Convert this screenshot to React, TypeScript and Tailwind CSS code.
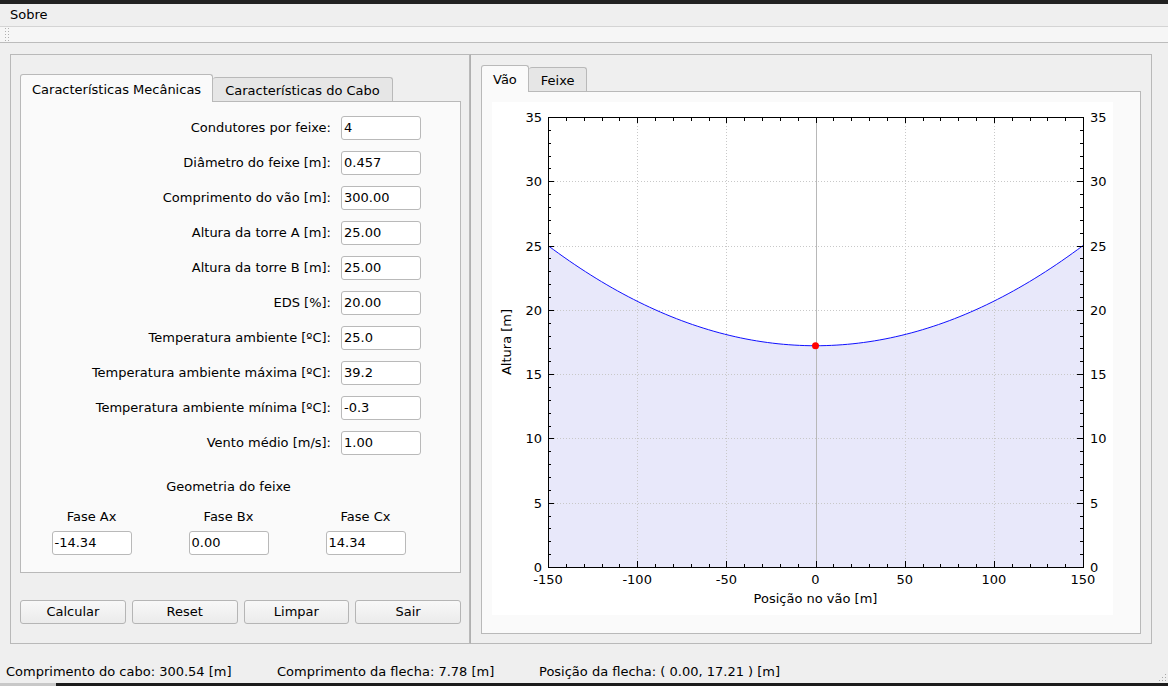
import React from 'react'

const FORM_ROWS = [
  { label: 'Condutores por feixe:', value: '4' },
  { label: 'Diâmetro do feixe [m]:', value: '0.457' },
  { label: 'Comprimento do vão [m]:', value: '300.00' },
  { label: 'Altura da torre A [m]:', value: '25.00' },
  { label: 'Altura da torre B [m]:', value: '25.00' },
  { label: 'EDS [%]:', value: '20.00' },
  { label: 'Temperatura ambiente [ºC]:', value: '25.0' },
  { label: 'Temperatura ambiente máxima [ºC]:', value: '39.2' },
  { label: 'Temperatura ambiente mínima [ºC]:', value: '-0.3' },
  { label: 'Vento médio [m/s]:', value: '1.00' },
]

const FASES = [
  { label: 'Fase Ax', value: '-14.34' },
  { label: 'Fase Bx', value: '0.00' },
  { label: 'Fase Cx', value: '14.34' },
]

const BUTTONS = ['Calcular', 'Reset', 'Limpar', 'Sair']

function Field({ value }: { value: string }) {
  return (
    <div className="h-[24px] w-[80px] rounded-[3px] border border-[#b9b9b9] bg-white pl-[2px] leading-[22px]">
      {value}
    </div>
  )
}

// plot geometry, svg coords
const AX0 = 56
const AX1 = 591
const AY0 = 15
const AY1 = 465
const X = (v: number) => AX0 + ((v + 150) * (AX1 - AX0)) / 300
const Y = (v: number) => AY1 - (v * (AY1 - AY0)) / 35
const h = (v: number) => 17.21 + 7.79 * (v / 150) * (v / 150)

function Chart() {
  const pts: string[] = []
  for (let v = -150; v <= 150; v += 3) pts.push(`${X(v).toFixed(2)},${Y(h(v)).toFixed(2)}`)
  const curve = 'M' + pts.join(' L')
  const fill = `M${X(-150)},${Y(0)} L` + pts.join(' L') + ` L${X(150)},${Y(0)} Z`

  const xMinor: number[] = []
  for (let v = -140; v < 150; v += 10) if (v % 50 !== 0) xMinor.push(v)
  const xMajor = [-100, -50, 0, 50, 100]
  const yMinor: number[] = []
  for (let v = 1; v < 35; v++) if (v % 5 !== 0) yMinor.push(v)
  const yMajor = [5, 10, 15, 20, 25, 30]
  const font = { fontFamily: 'DejaVu Sans, sans-serif', fontSize: 13 }

  return (
    <svg width="621" height="513" viewBox="0 0 621 513">
      <path d={fill} fill="#e8e8fa" />
      <g stroke="#c8c8c8" strokeDasharray="1 2" shapeRendering="crispEdges">
        {[-100, -50, 50, 100].map(v => (
          <line key={'gx' + v} x1={Math.round(X(v)) + 0.5} x2={Math.round(X(v)) + 0.5} y1={AY0} y2={AY1} />
        ))}
        {yMajor.map(v => (
          <line key={'gy' + v} y1={Math.round(Y(v)) + 0.5} y2={Math.round(Y(v)) + 0.5} x1={AX0} x2={AX1} />
        ))}
      </g>
      <line x1={Math.round(X(0)) + 0.5} x2={Math.round(X(0)) + 0.5} y1={AY0} y2={AY1} stroke="#b8b8b8" shapeRendering="crispEdges" />
      <path d={curve} fill="none" stroke="#1010ff" strokeWidth="1" />
      <circle cx={X(0)} cy={Y(17.21)} r="3.5" fill="#ff0000" />
      <g stroke="#000" shapeRendering="crispEdges">
        <rect x={AX0 + 0.5} y={AY0 + 0.5} width={AX1 - AX0} height={AY1 - AY0} fill="none" />
        {xMinor.map(v => {
          const x = Math.round(X(v)) + 0.5
          return (
            <g key={'xm' + v}>
              <line x1={x} x2={x} y1={AY1} y2={AY1 - 3} />
              <line x1={x} x2={x} y1={AY0} y2={AY0 + 4} />
            </g>
          )
        })}
        {xMajor.map(v => {
          const x = Math.round(X(v)) + 0.5
          return (
            <g key={'xM' + v}>
              <line x1={x} x2={x} y1={AY1} y2={AY1 - 6} />
              <line x1={x} x2={x} y1={AY0} y2={AY0 + 6} />
            </g>
          )
        })}
        {yMinor.map(v => {
          const y = Math.round(Y(v)) + 0.5
          return (
            <g key={'ym' + v}>
              <line x1={AX0} x2={AX0 + 3} y1={y} y2={y} />
              <line x1={AX1} x2={AX1 - 3} y1={y} y2={y} />
            </g>
          )
        })}
        {yMajor.map(v => {
          const y = Math.round(Y(v)) + 0.5
          return (
            <g key={'yM' + v}>
              <line x1={AX0} x2={AX0 + 6} y1={y} y2={y} />
              <line x1={AX1} x2={AX1 - 6} y1={y} y2={y} />
            </g>
          )
        })}
      </g>
      <g {...font} fill="#000">
        {[0, 5, 10, 15, 20, 25, 30, 35].map(v => (
          <g key={'yl' + v}>
            <text x={AX0 - 6} y={Y(v) + 5} textAnchor="end">{v}</text>
            <text x={AX1 + 7} y={Y(v) + 5}>{v}</text>
          </g>
        ))}
        {[-150, -100, -50, 0, 50, 100, 150].map(v => (
          <text key={'xl' + v} x={X(v)} y={AY1 + 17} textAnchor="middle">{v}</text>
        ))}
        <text x={(AX0 + AX1) / 2} y={AY1 + 36} textAnchor="middle">Posição no vão [m]</text>
        <text x={19} y={(AY0 + AY1) / 2} textAnchor="middle" transform={`rotate(-90 19 ${(AY0 + AY1) / 2})`}>Altura [m]</text>
      </g>
    </svg>
  )
}

export default function App() {
  return (
    <div className="flex h-[686px] w-[1168px] flex-col overflow-hidden bg-[#efefef] font-['DejaVu_Sans',sans-serif] text-[13px] text-black">
      <div className="h-[4px] shrink-0 bg-[#222222]" />

      {/* menu bar */}
      <div className="flex h-[22px] shrink-0 items-center px-[10px]">Sobre</div>

      {/* toolbar */}
      <div className="flex h-[17px] shrink-0 items-center border-y border-[#d4d4d4] border-b-[#bcbcbc] bg-[#f6f6f6] pl-[5px]">
        <div className="flex h-[13px] w-[4px] flex-col justify-between">
          {[0, 1, 2, 3, 4].map(i => (
            <div key={i} className="flex justify-between">
              <div className="h-px w-px bg-[#b0b0b0]" />
              <div className="h-px w-px bg-[#b0b0b0]" />
            </div>
          ))}
        </div>
      </div>

      {/* central area */}
      <div className="flex h-[615px] shrink-0 px-[10px] pb-[14px] pt-[11px]">
        {/* left frame */}
        <div className="flex w-[460px] flex-col border border-[#b9b9b9] pl-[9px] pr-[8px] pt-[19px]">
          <div className="flex h-[27px] items-end">
            <div className="relative z-10 -mb-px flex h-[28px] items-start rounded-t-[3px] border border-b-0 border-[#b9b9b9] bg-[#fafafa] px-[11px] pt-[5px]">
              Características Mecânicas
            </div>
            <div className="flex h-[24px] items-start rounded-t-[3px] border border-b-0 border-l-0 border-[#b9b9b9] bg-[#e6e6e6] px-[12px] pt-[3px]">
              Características do Cabo
            </div>
          </div>
          <div className="flex h-[472px] w-[441px] flex-col border border-[#b9b9b9] bg-[#fafafa] pt-[14px]">
            <div className="flex flex-col gap-[11px]">
              {FORM_ROWS.map(r => (
                <div key={r.label} className="flex items-center">
                  <div className="w-[310px] text-right">{r.label}</div>
                  <div className="ml-[10px]">
                    <Field value={r.value} />
                  </div>
                </div>
              ))}
            </div>
            <div className="ml-[2px] mt-[24px] w-[411px] text-center leading-[16px]">Geometria do feixe</div>
            <div className="ml-[2px] mt-[14px] grid w-[411px] grid-cols-3">
              {FASES.map(f => (
                <div key={f.label} className="flex flex-col items-center">
                  <div className="leading-[16px]">{f.label}</div>
                  <div className="mt-[6px]">
                    <Field value={f.value} />
                  </div>
                </div>
              ))}
            </div>
          </div>
          <div className="mt-[27px] flex gap-[6px]">
            {BUTTONS.map(b => (
              <div
                key={b}
                className="flex h-[24px] w-[106px] items-center justify-center rounded-[3px] border border-[#b5b5b5] bg-gradient-to-b from-[#f8f8f8] to-[#ebebeb]"
              >
                {b}
              </div>
            ))}
          </div>
        </div>

        {/* right frame */}
        <div className="flex w-[682px] flex-col border border-l-[#b0b0b0] border-[#b9b9b9] px-[10px] pt-[10px]">
          <div className="flex h-[26px] items-end">
            <div className="relative z-10 -mb-px flex h-[27px] items-start rounded-t-[3px] border border-b-0 border-[#b9b9b9] bg-[#fafafa] px-[11px] pt-[4px]">
              Vão
            </div>
            <div className="flex h-[24px] items-start rounded-t-[3px] border border-b-0 border-l-0 border-[#b9b9b9] bg-[#e6e6e6] px-[12px] pt-[3px]">
              Feixe
            </div>
          </div>
          <div className="h-[543px] w-[660px] border border-[#b9b9b9] bg-[#fafafa] pl-[10px] pt-[10px]">
            <div className="h-[513px] w-[621px] bg-white">
              <Chart />
            </div>
          </div>
        </div>
      </div>

      {/* status bar */}
      <div className="relative flex h-[25px] shrink-0 items-center px-[6px] pt-[3px]">
        <span className="w-[271px]">Comprimento do cabo: 300.54 [m]</span>
        <span className="w-[262px]">Comprimento da flecha: 7.78 [m]</span>
        <span>Posição da flecha: ( 0.00, 17.21 ) [m]</span>
        <svg className="absolute bottom-[1px] right-[1px]" width="10" height="10" viewBox="0 0 10 10">
          {[
            [8, 2], [5, 5], [8, 5], [2, 8], [5, 8], [8, 8],
          ].map(([x, y], i) => (
            <rect key={i} x={x} y={y} width="1" height="1" fill="#a8a8a8" />
          ))}
        </svg>
      </div>

      <div className="flex h-[3px] shrink-0 bg-[#1c1c1c]">
        <div className="w-[56px] bg-[#c8c8c8]" />
      </div>
    </div>
  )
}
